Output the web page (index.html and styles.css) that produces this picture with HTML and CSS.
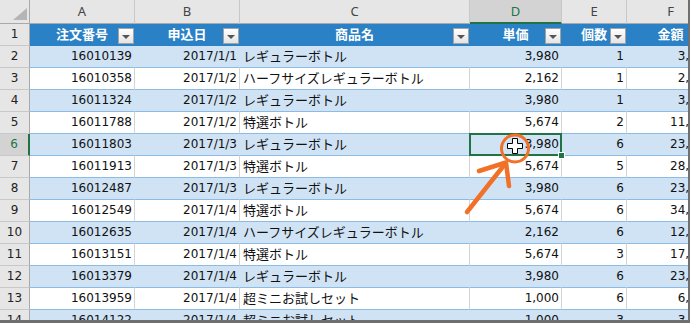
FILE: index.html
```html
<!DOCTYPE html>
<html lang="ja">
<head>
<meta charset="utf-8">
<title>Sheet</title>
<link rel="stylesheet" href="styles.css">
</head>
<body>
<div class="sheet">
  <div class="row colhead">
    <div class="corner"><span class="tri"></span></div>
    <div class="ch">A</div>
    <div class="ch">B</div>
    <div class="ch">C</div>
    <div class="ch active">D</div>
    <div class="ch">E</div>
    <div class="ch">F</div>
  </div>
  <div class="row thead">
    <div class="rh">1</div>
    <div class="th">注文番号<span class="fb"><span class="arr"></span></span></div>
    <div class="th">申込日<span class="fb"><span class="arr"></span></span></div>
    <div class="th">商品名<span class="fb"><span class="arr"></span></span></div>
    <div class="th">単価<span class="fb"><span class="arr"></span></span></div>
    <div class="th">個数<span class="fb"><span class="arr"></span></span></div>
    <div class="th">金額<span class="fb"><span class="arr"></span></span></div>
  </div>
  <div class="row band"><div class="rh">2</div><div class="cell">16010139</div><div class="cell">2017/1/1</div><div class="cell name">レギュラーボトル</div><div class="cell">3,980</div><div class="cell">1</div><div class="cell">3,980</div></div>
  <div class="row plain"><div class="rh">3</div><div class="cell">16010358</div><div class="cell">2017/1/2</div><div class="cell name">ハーフサイズレギュラーボトル</div><div class="cell">2,162</div><div class="cell">1</div><div class="cell">2,162</div></div>
  <div class="row band"><div class="rh">4</div><div class="cell">16011324</div><div class="cell">2017/1/2</div><div class="cell name">レギュラーボトル</div><div class="cell">3,980</div><div class="cell">1</div><div class="cell">3,980</div></div>
  <div class="row plain"><div class="rh">5</div><div class="cell">16011788</div><div class="cell">2017/1/2</div><div class="cell name">特選ボトル</div><div class="cell">5,674</div><div class="cell">2</div><div class="cell">11,348</div></div>
  <div class="row band"><div class="rh active">6</div><div class="cell">16011803</div><div class="cell">2017/1/3</div><div class="cell name">レギュラーボトル</div><div class="cell sel">3,980</div><div class="cell">6</div><div class="cell">23,880</div></div>
  <div class="row plain"><div class="rh">7</div><div class="cell">16011913</div><div class="cell">2017/1/3</div><div class="cell name">特選ボトル</div><div class="cell">5,674</div><div class="cell">5</div><div class="cell">28,370</div></div>
  <div class="row band"><div class="rh">8</div><div class="cell">16012487</div><div class="cell">2017/1/3</div><div class="cell name">レギュラーボトル</div><div class="cell">3,980</div><div class="cell">6</div><div class="cell">23,880</div></div>
  <div class="row plain"><div class="rh">9</div><div class="cell">16012549</div><div class="cell">2017/1/4</div><div class="cell name">特選ボトル</div><div class="cell">5,674</div><div class="cell">6</div><div class="cell">34,044</div></div>
  <div class="row band"><div class="rh">10</div><div class="cell">16012635</div><div class="cell">2017/1/4</div><div class="cell name">ハーフサイズレギュラーボトル</div><div class="cell">2,162</div><div class="cell">6</div><div class="cell">12,972</div></div>
  <div class="row plain"><div class="rh">11</div><div class="cell">16013151</div><div class="cell">2017/1/4</div><div class="cell name">特選ボトル</div><div class="cell">5,674</div><div class="cell">3</div><div class="cell">17,022</div></div>
  <div class="row band"><div class="rh">12</div><div class="cell">16013379</div><div class="cell">2017/1/4</div><div class="cell name">レギュラーボトル</div><div class="cell">3,980</div><div class="cell">6</div><div class="cell">23,880</div></div>
  <div class="row plain"><div class="rh">13</div><div class="cell">16013959</div><div class="cell">2017/1/4</div><div class="cell name">超ミニお試しセット</div><div class="cell">1,000</div><div class="cell">6</div><div class="cell">6,000</div></div>
  <div class="row band"><div class="rh">14</div><div class="cell">16014122</div><div class="cell">2017/1/4</div><div class="cell name">超ミニお試しセット</div><div class="cell">1,000</div><div class="cell">3</div><div class="cell">3,000</div></div>

  <svg class="annot" width="690" height="323" viewBox="0 0 690 323">
    <circle cx="515" cy="148.5" r="13.5" fill="none" stroke="#f07127" stroke-width="3"/>
    <polygon points="512.5,138.5 517.5,138.5 517.5,143.5 522.5,143.5 522.5,148.5 517.5,148.5 517.5,153.5 512.5,153.5 512.5,148.5 507.5,148.5 507.5,143.5 512.5,143.5" fill="#fff" stroke="#000" stroke-width="1"/>
    <line x1="467" y1="212" x2="505" y2="164" stroke="#f07127" stroke-width="4.5" stroke-linecap="round"/>
    <polyline points="479,171 506,162.5 509,186" fill="none" stroke="#f07127" stroke-width="4.5" stroke-linecap="round" stroke-linejoin="round"/>
  </svg>
</div>
</body>
</html>
```

FILE: styles.css
```css
html, body {
  margin: 0;
  padding: 0;
  background: #fff;
}

.sheet {
  position: relative;
  width: 690px;
  height: 323px;
  box-sizing: border-box;
  border-right: 2px solid #6f6f6f;
  border-bottom: 3px solid #6f6f6f;
  overflow: hidden;
  background: #fff;
}

.row {
  display: grid;
  grid-template-columns: 30px 105px 105px 230px 92px 65px 88px;
  height: 22px;
}

.row > div {
  box-sizing: border-box;
  white-space: nowrap;
}

/* column header */
.colhead {
  height: 24px;
}

.corner {
  background: #e6e6e6;
  border-right: 1px solid #a9a9a9;
  border-bottom: 1px solid #a9a9a9;
  display: flex;
  justify-content: flex-end;
  align-items: flex-end;
  padding: 0 2px 3px 0;
}

.tri {
  width: 0;
  height: 0;
  border-left: 14px solid transparent;
  border-bottom: 12px solid #b5b5b5;
}

.ch {
  background: #e6e6e6;
  border-right: 1px solid #c8c8c8;
  border-bottom: 1px solid #a9a9a9;
  text-align: center;
  line-height: 23px;
  font-family: "Noto Sans", sans-serif;
  font-size: 13px;
  color: #444;
}

.ch.active {
  background: #d3d3d3;
  color: #217346;
  border-bottom: 2px solid #217346;
  line-height: 22px;
}

/* row header */
.rh {
  background: #e6e6e6;
  border-right: 1px solid #a9a9a9;
  border-bottom: 1px solid #c8c8c8;
  text-align: center;
  line-height: 21px;
  font-family: "DejaVu Sans", sans-serif;
  font-size: 12px;
  color: #222;
}

.rh.active {
  background: #d3d3d3;
  color: #217346;
  border-right: 2px solid #217346;
}

/* table header */
.th {
  position: relative;
  background: #2a81c6;
  border-right: 1px solid #2a81c6;
  border-bottom: 1px solid #2a81c6;
  color: #fff;
  font-family: "Noto Sans CJK JP", sans-serif;
  font-weight: bold;
  font-size: 13px;
  line-height: 20px;
  text-align: center;
}

.fb {
  position: absolute;
  right: 0;
  top: 4px;
  width: 16px;
  height: 16px;
  box-sizing: border-box;
  border: 1px solid #a3a3a3;
  background: linear-gradient(#ffffff, #e4e4e4);
  display: flex;
  align-items: center;
  justify-content: center;
}

.arr {
  width: 0;
  height: 0;
  margin-top: 1px;
  border-left: 4px solid transparent;
  border-right: 4px solid transparent;
  border-top: 4px solid #555;
}

/* data cells */
.cell {
  border-right: 1px solid #d4d4d4;
  border-bottom: 1px solid #8cbbe6;
  padding: 0 2px 0 3px;
  line-height: 21px;
  text-align: right;
  font-family: "DejaVu Sans", sans-serif;
  font-size: 12px;
  color: #111;
}

.band .cell {
  background: #cfe3f5;
  border-right-color: #cfe3f5;
}

.plain .cell {
  background: #fff;
}

.cell.name {
  text-align: left;
  font-family: "Noto Sans CJK JP", sans-serif;
  font-size: 13px;
  line-height: 19px;
}

.cell.sel {
  position: relative;
}

.cell.sel::before {
  content: "";
  position: absolute;
  left: -1px;
  top: -1px;
  right: -1px;
  bottom: -1px;
  border: 2px solid #217346;
  z-index: 2;
}

.cell.sel::after {
  content: "";
  position: absolute;
  right: -4px;
  bottom: -4px;
  width: 5px;
  height: 5px;
  background: #217346;
  border: 1px solid #fff;
  z-index: 3;
}

.annot {
  position: absolute;
  left: 0;
  top: 0;
  pointer-events: none;
  z-index: 5;
}
```
